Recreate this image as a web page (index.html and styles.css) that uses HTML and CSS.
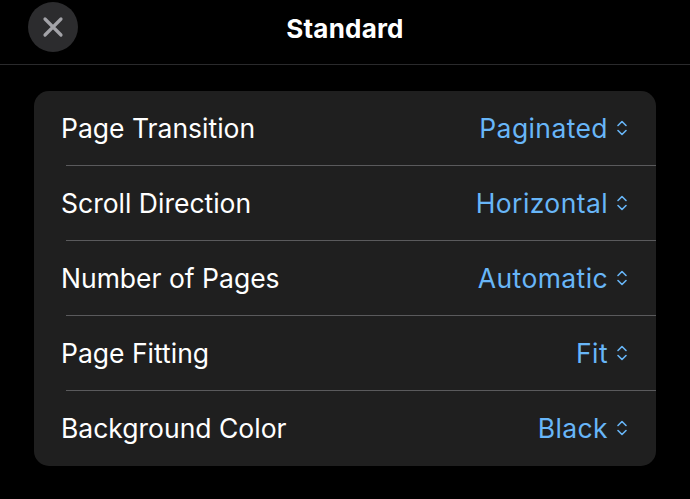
FILE: index.html
```html
<!DOCTYPE html>
<html>
<head>
<meta charset="utf-8">
<link rel="stylesheet" href="styles.css">
</head>
<body>
<header class="topbar">
  <button class="close" aria-label="Close">
    <svg width="22" height="22" viewBox="0 0 22 22"><path d="M3 3 L19 19 M19 3 L3 19" stroke="#a3a3a8" stroke-width="3.2" stroke-linecap="round" fill="none"/></svg>
  </button>
  <h1 class="title">Standard</h1>
</header>
<main class="content">
  <section class="card">
    <div class="row"><span class="label">Page Transition</span><span class="value">Paginated<svg class="chev" viewBox="0 0 12 20" width="12" height="20"><path d="M2 7.5 L6 3.5 L10 7.5 M2 12.5 L6 16.5 L10 12.5" stroke="currentColor" stroke-width="1.6" fill="none" stroke-linecap="round" stroke-linejoin="round"/></svg></span></div>
    <div class="row"><span class="label">Scroll Direction</span><span class="value">Horizontal<svg class="chev" viewBox="0 0 12 20" width="12" height="20"><path d="M2 7.5 L6 3.5 L10 7.5 M2 12.5 L6 16.5 L10 12.5" stroke="currentColor" stroke-width="1.6" fill="none" stroke-linecap="round" stroke-linejoin="round"/></svg></span></div>
    <div class="row"><span class="label">Number of Pages</span><span class="value">Automatic<svg class="chev" viewBox="0 0 12 20" width="12" height="20"><path d="M2 7.5 L6 3.5 L10 7.5 M2 12.5 L6 16.5 L10 12.5" stroke="currentColor" stroke-width="1.6" fill="none" stroke-linecap="round" stroke-linejoin="round"/></svg></span></div>
    <div class="row"><span class="label">Page Fitting</span><span class="value">Fit<svg class="chev" viewBox="0 0 12 20" width="12" height="20"><path d="M2 7.5 L6 3.5 L10 7.5 M2 12.5 L6 16.5 L10 12.5" stroke="currentColor" stroke-width="1.6" fill="none" stroke-linecap="round" stroke-linejoin="round"/></svg></span></div>
    <div class="row"><span class="label">Background Color</span><span class="value">Black<svg class="chev" viewBox="0 0 12 20" width="12" height="20"><path d="M2 7.5 L6 3.5 L10 7.5 M2 12.5 L6 16.5 L10 12.5" stroke="currentColor" stroke-width="1.6" fill="none" stroke-linecap="round" stroke-linejoin="round"/></svg></span></div>
  </section>
</main>
</body>
</html>
```
FILE: styles.css
```css
* { box-sizing: border-box; }
html, body { margin: 0; padding: 0; background: #000; }
body {
  width: 690px;
  height: 499px;
  overflow: hidden;
  font-family: Inter, "Noto Sans", "Liberation Sans", sans-serif;
  color: #fff;
}
.topbar {
  position: relative;
  height: 65px;
  border-bottom: 1px solid #2a2a2c;
  display: flex;
  align-items: center;
  justify-content: center;
}
.close {
  position: absolute;
  left: 28px;
  top: 2px;
  width: 50px;
  height: 50px;
  border-radius: 50%;
  border: none;
  background: #2c2c2e;
  display: flex;
  align-items: center;
  justify-content: center;
  padding: 0;
}
.title {
  margin: 0 0 8px 0;
  font-size: 26px;
  font-weight: 700;
  letter-spacing: 0.2px;
}
.content {
  padding: 26px 34px 0 34px;
}
.card {
  background: #1f1f1f;
  border-radius: 15px;
  overflow: hidden;
}
.row {
  height: 75px;
  display: flex;
  align-items: center;
  justify-content: space-between;
  padding: 0 28px 2px 27px;
  position: relative;
}
.row + .row::before {
  content: "";
  position: absolute;
  top: -1px;
  left: 32px;
  right: 0;
  height: 1px;
  background: #5a5a5c;
}
.label {
  font-size: 26.5px;
  font-weight: 400;
  color: #fff;
}
.value {
  font-size: 26.5px;
  letter-spacing: 0.4px;
  color: #68b6f8;
  display: flex;
  align-items: center;
  gap: 8px;
}
.chev { display: block; }
```
